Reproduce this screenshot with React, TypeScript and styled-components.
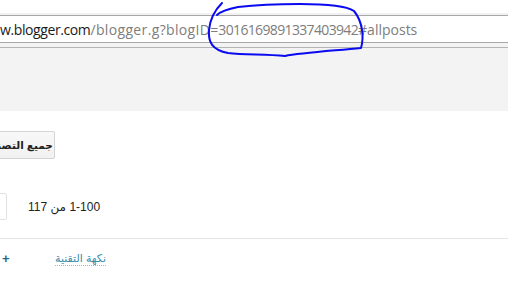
import React from "react";
import styled, { createGlobalStyle } from "styled-components";

const GlobalStyle = createGlobalStyle`
  html, body {
    margin: 0;
    padding: 0;
    background: #ffffff;
    width: 508px;
    height: 284px;
    overflow: hidden;
  }
  body {
    font-family: "Liberation Sans", "DejaVu Sans", Arial, sans-serif;
  }
`;

const Page = styled.div`
  position: relative;
  width: 508px;
  height: 284px;
  overflow: hidden;
`;

const BrowserTop = styled.div`
  padding-top: 13px;
  background: #ffffff;
`;

const UrlStrip = styled.div`
  border-top: 2px solid #f1f1f1;
`;

const UrlBox = styled.div`
  height: 26px;
  border-top: 1px solid #a8a8a8;
  border-bottom: 1px solid #a8a8a8;
  background: #ffffff;
  display: flex;
  align-items: center;
  white-space: nowrap;
  overflow: hidden;
  font-family: "Open Sans", "Noto Sans", sans-serif;
  font-size: 14px;
  color: #7d7d7d;
`;

const UrlPart = styled.span<{ $spacing?: number; $dark?: boolean }>`
  letter-spacing: ${(p) => p.$spacing ?? 0}px;
  color: ${(p) => (p.$dark ? "#1a1a1a" : "#7d7d7d")};
`;

const HeaderBand = styled.div`
  height: 64px;
  background: #f3f3f3;
  border-top: 4px solid #f3f3f3;
  box-shadow: inset 0 1px 0 #b4b4b4;
`;

const Content = styled.div`
  padding-top: 20px;
`;

const Toolbar = styled.div`
  display: flex;
  height: 28px;
`;

const CategoryButton = styled.div`
  width: 85px;
  margin-left: -30px;
  box-sizing: border-box;
  height: 28px;
  border: 1px solid #d4d4d4;
  border-radius: 2px;
  background: linear-gradient(#f8f8f8, #f1f1f1);
  display: flex;
  align-items: center;
  justify-content: flex-end;
  padding-right: 10px;
  font-size: 10.5px;
  font-weight: bold;
  color: #222222;
  white-space: nowrap;
  direction: rtl;
  overflow: hidden;
`;

const PagerRow = styled.div`
  display: flex;
  align-items: center;
  margin-top: 34px;
  height: 27px;
  gap: 21px;
`;

const PageSelect = styled.div`
  width: 47px;
  margin-left: -40px;
  height: 27px;
  box-sizing: border-box;
  border: 1px solid #e2e2e2;
  border-radius: 2px;
  background: #ffffff;
`;

const PagerText = styled.span`
  direction: rtl;
  font-size: 12px;
  color: #222222;
`;

const Divider = styled.div`
  margin-top: 18px;
  border-top: 1px solid #e5e5e5;
`;

const ListRow = styled.div`
  display: flex;
  align-items: center;
  height: 39px;
  padding-left: 2px;
`;

const AddIcon = styled.span`
  width: 7px;
  font-size: 13px;
  font-weight: bold;
  color: #1f6b8a;
  line-height: 1;
`;

const BlogLink = styled.span`
  margin-left: 46px;
  direction: rtl;
  font-size: 11px;
  color: #3b8ca8;
  border-bottom: 1px dotted #8fbccc;
  line-height: 14px;
`;

const Scribble = styled.svg`
  position: absolute;
  left: 0;
  top: 0;
  pointer-events: none;
`;

export default function App() {
  return (
    <Page>
      <GlobalStyle />
      <BrowserTop>
        <UrlStrip>
          <UrlBox>
            <UrlPart $dark $spacing={-0.4}>w.blogger.com</UrlPart>
            <UrlPart $spacing={0.35}>/blogger.g?blogID</UrlPart>
            <UrlPart>=</UrlPart>
            <UrlPart $spacing={-0.65}>3016169891337403942</UrlPart>
            <UrlPart>#allposts</UrlPart>
          </UrlBox>
        </UrlStrip>
        <HeaderBand />
      </BrowserTop>
      <Content>
        <Toolbar>
          <CategoryButton>جميع التصنيفات</CategoryButton>
        </Toolbar>
        <PagerRow>
          <PageSelect />
          <PagerText>1-100 من 117</PagerText>
        </PagerRow>
        <Divider />
        <ListRow>
          <AddIcon>+</AddIcon>
          <BlogLink>نكهة التقنية</BlogLink>
        </ListRow>
      </Content>
      <Scribble width="508" height="284" viewBox="0 0 508 284">
        <path
          d="M222,3 C216,9 210,18 209,30 C208,42 212,50 228,53 C245,55 265,54 285,56 C300,53 330,51 361,48 C364,38 363,22 354,11 C345,5 320,4 300,4 C280,4 255,5 238,7 C228,9 220,12 217,15"
          fill="none"
          stroke="#0a0af0"
          strokeWidth="2"
          strokeLinecap="round"
          strokeLinejoin="round"
        />
      </Scribble>
    </Page>
  );
}
